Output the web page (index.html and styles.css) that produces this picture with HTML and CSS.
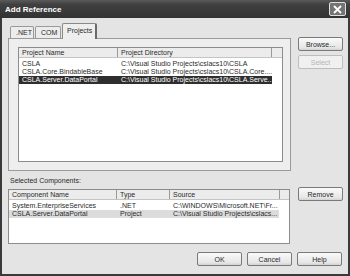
FILE: index.html
```html
<!DOCTYPE html>
<html>
<head>
    <title>Add Reference</title>
    <link rel="stylesheet" href="styles.css">
</head>
<body>
<div class="window">
    <div class="titlebar">
        <span class="title">Add Reference</span>
        <span class="close">
            <svg width="11" height="11" viewBox="0 0 11 11"><path d="M2 2 L9 9 M9 2 L2 9" stroke="#fff" stroke-width="1.8"/></svg>
        </span>
    </div>
    <div class="content">
        <div class="top">
            <div class="tabbox">
                <div class="tabs">
                    <span class="tab tab-net">.NET</span>
                    <span class="tab tab-com">COM</span>
                    <span class="tab tab-projects active">Projects</span>
                </div>
                <div class="panel">
                    <div class="list projects">
                        <div class="head"><span>Project Name</span><span>Project Directory</span><span></span></div>
                        <div class="row"><span>CSLA</span><span>C:\Visual Studio Projects\cslacs10\CSLA</span></div>
                        <div class="row"><span>CSLA.Core.BindableBase</span><span>C:\Visual Studio Projects\cslacs10\CSLA.Core....</span></div>
                        <div class="row picked"><span>CSLA.Server.DataPortal</span><span>C:\Visual Studio Projects\cslacs10\CSLA.Serve...</span></div>
                    </div>
                </div>
            </div>
            <div class="side">
                <button class="btn">Browse...</button>
                <button class="btn" disabled>Select</button>
            </div>
        </div>

        <div class="caption">Selected Components:</div>

        <div class="bottom">
            <div class="list selected">
                <div class="head"><span>Component Name</span><span>Type</span><span>Source</span><span></span></div>
                <div class="row"><span>System.EnterpriseServices</span><span>.NET</span><span>C:\WINDOWS\Microsoft.NET\Fr...</span></div>
                <div class="row soft"><span>CSLA.Server.DataPortal</span><span>Project</span><span>C:\Visual Studio Projects\cslacs...</span></div>
            </div>
            <div class="side side-remove">
                <button class="btn">Remove</button>
            </div>
        </div>

        <div class="footer">
            <button class="btn">OK</button>
            <button class="btn">Cancel</button>
            <button class="btn">Help</button>
        </div>
    </div>
</div>
</body>
</html>
```

FILE: styles.css
```css
* {
    box-sizing: border-box;
}
body {
    margin: 0;
    background: #e4e4e4;
    font-family: "Liberation Sans", Arial, sans-serif;
    font-size: 7px;
    color: #2a2a2a;
}
.window {
    width: 350px;
    height: 276px;
    background: #e4e4e4;
    border-left: 2px solid #3a3a3a;
    border-right: 2px solid #3a3a3a;
    border-bottom: 2px solid #3a3a3a;
}
.titlebar {
    height: 18px;
    margin: 0 -2px;
    padding: 0 4px 0 5px;
    display: flex;
    align-items: center;
    justify-content: space-between;
    background: linear-gradient(#5a5a5a 0%, #404040 25%, #333 100%);
}
.title {
    color: #fff;
    font-weight: bold;
    font-size: 8px;
}
.close {
    width: 17px;
    height: 14px;
    display: flex;
    align-items: center;
    justify-content: center;
    border: 1px solid #e0e0e0;
    border-radius: 2px;
    background: #747474;
}
.content {
    padding: 0 5px 0 6px;
}
.top {
    display: flex;
    margin-top: 5px;
}
.tabs {
    display: flex;
    align-items: flex-end;
    height: 15px;
    padding-left: 2px;
    position: relative;
    z-index: 1;
}
.tab {
    height: 12px;
    line-height: 11px;
    padding-left: 5px;
    border: 1px solid #9a9a9a;
    border-bottom: none;
    border-radius: 2px 2px 0 0;
    background: #ececec;
    margin-right: 1px;
}
.tab-net { width: 24px; }
.tab-com { width: 26px; }
.tab-projects { width: 35px; }
.tab.active {
    height: 16px;
    line-height: 13px;
    padding-left: 4px;
    margin-bottom: -1px;
    background: #eeeeee;
    border-color: #8a8a8a;
    border-right: 2px solid #6a6a6a;
}
.panel {
    width: 283px;
    height: 133px;
    padding: 8px 7px 8px 9px;
    border: 1px solid #9a9a9a;
    background: #eeeeee;
}
.list {
    background: #fff;
    border: 1px solid #8c8c8c;
    overflow: hidden;
}
.list.projects {
    height: 115px;
}
.head,
.row {
    display: grid;
    white-space: nowrap;
}
.projects .head,
.projects .row {
    grid-template-columns: 99px 154px 1fr;
}
.selected .head,
.selected .row {
    grid-template-columns: 108px 53px 110px 1fr;
}
.head {
    height: 10px;
    line-height: 9px;
    background: #ececec;
    border-bottom: 1px solid #c4c4c4;
    margin-bottom: 2px;
}
.head span {
    padding-left: 3px;
    border-right: 1px solid #9a9a9a;
    overflow: hidden;
}
.head span:last-child {
    border-right: none;
}
.row {
    height: 8px;
    line-height: 8px;
}
.row span {
    padding-left: 3px;
    overflow: hidden;
}
.row.picked {
    background: #2e2e2e;
    color: #fff;
    margin-right: 10px;
}
.row.soft {
    background: #dcdcdc;
    margin-right: 10px;
}
.side {
    display: flex;
    flex-direction: column;
    gap: 4px;
    margin-left: 7px;
    margin-top: 14px;
}
.btn {
    width: 45px;
    height: 14px;
    padding: 0;
    font-family: "Liberation Sans", Arial, sans-serif;
    font-size: 7px;
    color: #2a2a2a;
    border: 1px solid #7a7a7a;
    border-radius: 2px;
    background: linear-gradient(#fafafa, #e6e6e6 80%, #d2d2d2);
}
.btn:disabled {
    color: #b4b4b4;
    border-color: #bdbdbd;
    background: #f0f0f0;
}
.caption {
    height: 10px;
    line-height: 10px;
    margin: 5px 0 3px 2px;
}
.bottom {
    display: flex;
}
.list.selected {
    width: 282px;
    height: 55px;
}
.side-remove {
    margin-left: 8px;
    margin-top: -2px;
}
.footer {
    display: flex;
    justify-content: flex-end;
    gap: 5px;
    margin-top: 8px;
    padding-right: 1px;
}
```
